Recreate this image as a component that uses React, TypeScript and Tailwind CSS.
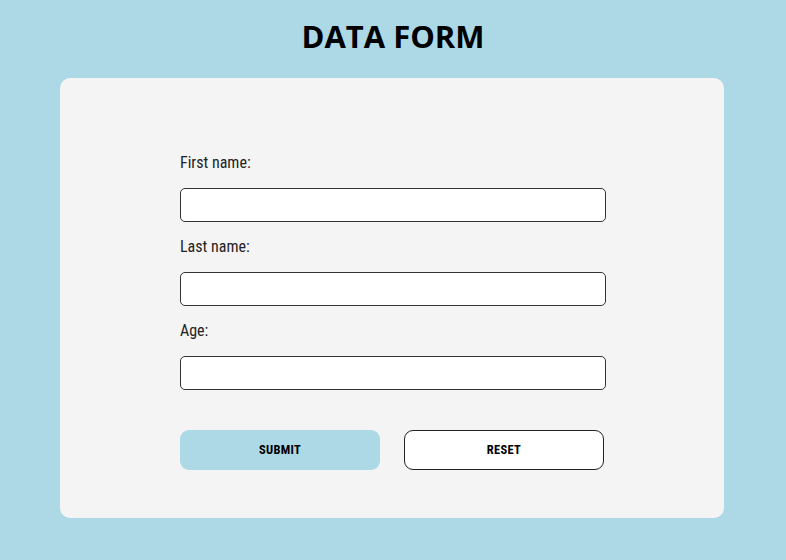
const labelFont = "font-['Roboto_Condensed','Liberation_Sans_Narrow',Roboto,sans-serif]";

function Field({ label }: { label: string }) {
  return (
    <div className="flex flex-col">
      <label className={`${labelFont} h-[20px] text-[16px] leading-[20px] text-[#222]`}>{label}</label>
      <input
        type="text"
        className="mt-[15px] h-[34px] w-[426px] rounded-[5px] border border-[#333] bg-white px-2"
      />
    </div>
  );
}

export default function App() {
  return (
    <div className="flex min-h-[560px] w-full flex-col items-center bg-[#add8e6]">
      <h1 className="mt-[15px] h-[43px] font-['Open_Sans',sans-serif] text-[31px] font-bold leading-[43px] text-black">
        DATA FORM
      </h1>
      <div className="ml-[60px] mt-[20px] flex h-[440px] w-[664px] flex-col items-start self-start rounded-[10px] bg-[#f4f4f4] px-[120px] pt-[75px]">
        <div className="flex flex-col gap-[15px]">
          <Field label="First name:" />
          <Field label="Last name:" />
          <Field label="Age:" />
        </div>
        <div className="mt-[40px] flex gap-[24px]">
          <button
            className={`${labelFont} h-[40px] w-[200px] rounded-[9px] bg-[#add8e6] pt-[1px] text-[12.5px] font-bold tracking-wide text-black`}
          >
            SUBMIT
          </button>
          <button
            className={`${labelFont} h-[40px] w-[200px] rounded-[9px] border border-[#222] bg-white pt-[1px] text-[12.5px] font-bold tracking-wide text-black`}
          >
            RESET
          </button>
        </div>
      </div>
    </div>
  );
}
